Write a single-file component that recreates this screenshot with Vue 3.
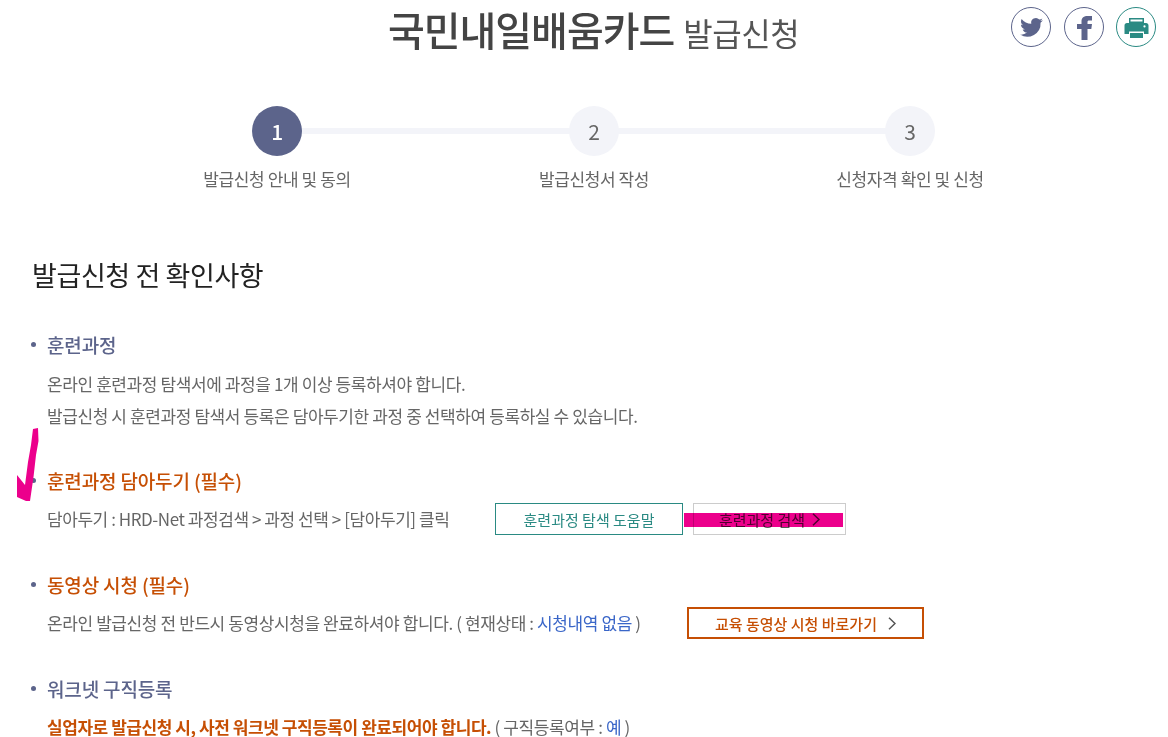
<template>
  <div class="page">
    <header class="head">
      <h1 class="title">국민내일배움카드 <small>발급신청</small></h1>
      <div class="share">
        <a class="round">
          <svg viewBox="0 0 24 24" width="25" height="25"><path fill="#5c648b" d="M23 5.100c-.8.4-1.700.6-2.600.7.9-.6 1.600-1.400 2-2.500-.9.5-1.800.9-2.900 1.100a4.500 4.500 0 0 0-7.700 4.100C8 8.300 4.700 6.500 2.500 3.800c-1.200 2.100-.6 4.700 1.400 6-.7 0-1.400-.2-2-.6 0 2.200 1.500 4.100 3.600 4.500-.7.2-1.400.2-2 .1.600 1.800 2.200 3.100 4.200 3.100A9 9 0 0 1 1 18.800a12.800 12.800 0 0 0 19.700-11.400c.9-.6 1.700-1.400 2.300-2.300z"/></svg>
        </a>
        <a class="round">
          <svg viewBox="0 0 38 38" width="38" height="38"><path fill="#5c648b" d="M16.500 32V21H12v-5h4.500v-2.500C16.500 9.500 19 8 22.500 8H27v4.500h-3c-1 0-1.500.5-1.500 1.500v2H27l-.7 5h-3.800v11z"/></svg>
        </a>
        <a class="round teal">
          <svg viewBox="0 0 38 38" width="38" height="38"><path fill="#2a8a83" fill-rule="evenodd" d="M12 10h15v5H12zM13.500 11.500v2h12v-2zM10 15h19c1.500 0 2.500 1 2.500 2.500V26H27v-2.500H12V26H7.500v-8.500C7.500 16 8.500 15 10 15zM27.500 17.300a1.100 1.100 0 1 0 0 2.200 1.100 1.100 0 0 0 0-2.200zM13 25h13v5H13z"/></svg>
        </a>
      </div>
    </header>

    <ol class="steps">
      <li v-for="(s, i) in steps" :key="s" class="step" :class="{ on: i === 0 }">
        <span class="num">{{ i + 1 }}</span>
        <span class="label">{{ s }}</span>
      </li>
    </ol>

    <section class="check">
      <h2 class="sec-title">발급신청 전 확인사항</h2>

      <div class="item">
        <h3>훈련과정</h3>
        <p>온라인 훈련과정 탐색서에 과정을 1개 이상 등록하셔야 합니다.</p>
        <p>발급신청 시 훈련과정 탐색서 등록은 담아두기한 과정 중 선택하여 등록하실 수 있습니다.</p>
      </div>

      <div class="item">
        <h3 class="req">훈련과정 담아두기 (필수)</h3>
        <div class="row">
          <p class="w-448">담아두기 : HRD-Net 과정검색 &gt; 과정 선택 &gt; [담아두기] 클릭</p>
          <a class="btn btn-teal">훈련과정 탐색 도움말</a>
          <a class="btn btn-gray">훈련과정 검색
            <svg viewBox="0 0 8 13" width="8" height="13"><path d="M1 .8l6 5.700-6 5.700" fill="none" stroke="#555" stroke-width="1.500"/></svg>
          </a>
        </div>
      </div>

      <div class="item">
        <h3 class="req">동영상 시청 (필수)</h3>
        <div class="row">
          <p class="w-640">온라인 발급신청 전 반드시 동영상시청을 완료하셔야 합니다. ( 현재상태 : <span class="blue">시청내역 없음</span> )</p>
          <a class="btn btn-orange">교육 동영상 시청 바로가기
            <svg viewBox="0 0 8 13" width="8" height="13"><path d="M1 .8l6 5.700-6 5.700" fill="none" stroke="#555" stroke-width="1.500"/></svg>
          </a>
        </div>
      </div>

      <div class="item">
        <h3>워크넷 구직등록</h3>
        <p><b class="warn">실업자로 발급신청 시, 사전 워크넷 구직등록이 완료되어야 합니다.</b> ( 구직등록여부 : <span class="blue">예</span> )</p>
      </div>
    </section>

    <!-- 형광펜 표시 -->
    <svg class="mark-arrow" width="24" height="76" viewBox="0 0 24 76">
      <path fill="#ec008c" d="M17 2l5-1 .5 13-2.500 14-2.500 22L14 74h-4l-9-4V48l8 10 3-23 3-17z"/>
    </svg>
    <div class="mark-bar"></div>
  </div>
</template>

<script setup>
const steps = ["발급신청 안내 및 동의", "발급신청서 작성", "신청자격 확인 및 신청"]
</script>

<style>
html, body { margin: 0; background: #fff; }
</style>

<style scoped>
.page {
  position: relative;
  width: 1168px;
  height: 737px;
  overflow: hidden;
  font-family: "Noto Sans CJK KR", "Noto Sans", sans-serif;
  color: #666;
  letter-spacing: -0.4px;
}
.head {
  position: relative;
  height: 106px;
}
.title {
  margin: 0;
  padding-left: 19px;
  text-align: center;
  font-size: 40px;
  font-weight: 500;
  line-height: 58px;
  letter-spacing: -1px;
  color: #444;
}
.title small {
  margin-left: 1px;
  font-size: 32px;
  font-weight: 400;
  letter-spacing: -0.5px;
  color: #555;
}
.share {
  position: absolute;
  top: 7px;
  right: 12px;
  display: flex;
  gap: 13px;
}
.round {
  width: 40px;
  height: 40px;
  box-sizing: border-box;
  border: 1px solid #5c648b;
  border-radius: 50%;
  display: flex;
  align-items: center;
  justify-content: center;
}
.round.teal {
  border-color: #2a8a83;
  margin-left: -1px;
}

.steps {
  list-style: none;
  margin: 0 0 0 119px;
  padding: 0;
  width: 948px;
  display: grid;
  grid-template-columns: 316px 318px 314px;
  position: relative;
}
.steps::before {
  content: "";
  position: absolute;
  left: 158px;
  right: 157px;
  top: 22px;
  height: 6px;
  background: #f3f4f9;
}
.step {
  display: flex;
  flex-direction: column;
  align-items: center;
  position: relative;
}
.num {
  width: 50px;
  height: 50px;
  border-radius: 50%;
  background: #f3f4f9;
  color: #666;
  font-size: 21px;
  line-height: 50px;
  text-align: center;
}
.on .num {
  background: #5c648b;
  color: #fff;
  font-weight: 500;
}
.label {
  margin-top: 11px;
  font-size: 17px;
  line-height: 24px;
}

.check {
  padding: 0 32px;
  margin-top: 65px;
}
.sec-title {
  margin: 0 0 37px;
  font-size: 27px;
  font-weight: 400;
  line-height: 38px;
  color: #222;
}
.item {
  position: relative;
  padding-left: 15px;
  margin-bottom: 36px;
}
.item::before {
  content: "";
  position: absolute;
  left: -1px;
  top: 11px;
  width: 5px;
  height: 5px;
  border-radius: 50%;
  background: #5c648b;
}
.item h3 {
  margin: 0 0 9px;
  font-size: 19px;
  font-weight: 500;
  line-height: 28px;
  letter-spacing: -0.15px;
  color: #5c648b;
}
.item h3.req { color: #c64f04; }
.item p {
  margin: 0;
  font-size: 17px;
  line-height: 31.5px;
}
.item:last-child p {
  margin-top: 14px;
  line-height: 20px;
}
.row {
  display: flex;
  align-items: center;
  margin-top: -1px;
}
.item .w-448 {
  width: 448px;
  letter-spacing: -0.44px;
}
.w-640 { width: 640px; }
.blue { color: #3a66c8; }
.warn {
  color: #c64f04;
  font-weight: 700;
  letter-spacing: -0.45px;
}
.btn {
  box-sizing: border-box;
  height: 32px;
  display: flex;
  align-items: center;
  justify-content: center;
  gap: 7px;
  font-size: 15px;
  letter-spacing: 0;
  white-space: nowrap;
}
.btn-teal {
  width: 188px;
  border: 1px solid #2a8a83;
  color: #2a8a83;
  margin-right: 10px;
}
.btn-gray {
  width: 153px;
  border: 1px solid #ccc;
  color: #555;
}
.btn-orange {
  width: 237px;
  border: 2px solid #c64f04;
  color: #c64f04;
  font-weight: 500;
  gap: 11px;
}

.mark-arrow {
  position: absolute;
  left: 16px;
  top: 427px;
}
.mark-bar {
  position: absolute;
  left: 684px;
  top: 513px;
  width: 159px;
  height: 14px;
  background: #ec008c;
  mix-blend-mode: multiply;
}
</style>
